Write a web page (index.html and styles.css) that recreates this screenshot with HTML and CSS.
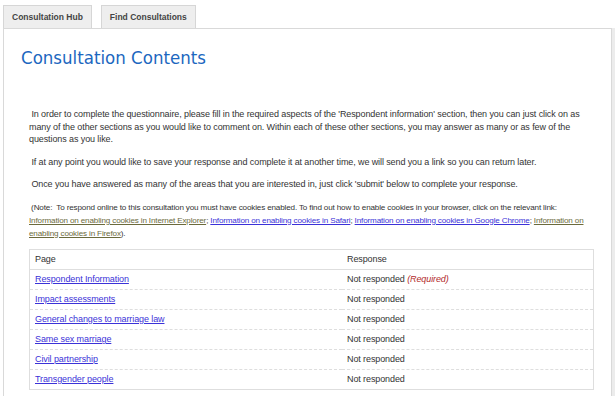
FILE: index.html
```html
<!DOCTYPE html>
<html lang="en">
<head>
  <meta charset="UTF-8" />
  <title>Consultation Contents</title>
  <link rel="stylesheet" href="styles.css">
</head>
<body>

  <div class="tabs">
    <a class="tab" href="#">Consultation Hub</a>
    <a class="tab" href="#">Find Consultations</a>
  </div>

  <div class="panel">
    <h1 class="title">Consultation Contents</h1>

    <div class="intro">
      <p>&nbsp;In order to complete the questionnaire, please fill in the required aspects of the 'Respondent information' section, then you can just click on as many of the other sections as you would like to comment on. Within each of these other sections, you may answer as many or as few of the questions as you like.</p>
      <p>&nbsp;If at any point you would like to save your response and complete it at another time, we will send you a link so you can return later.</p>
      <p>&nbsp;Once you have answered as many of the areas that you are interested in, just click 'submit' below to complete your response.</p>
      <p class="note">&nbsp;(Note:&nbsp; To respond online to this consultation you must have cookies enabled. To find out how to enable cookies in your browser, click on the relevant link: <a class="visited" href="#">Information on enabling cookies in Internet Explorer</a>; <a href="#">Information on enabling cookies in Safari</a>; <a href="#">Information on enabling cookies in Google Chrome</a>; <a class="visited" href="#">Information on enabling cookies in Firefox</a>).</p>
    </div>

    <table class="contents">
      <thead>
        <tr><th class="col-page">Page</th><th>Response</th></tr>
      </thead>
      <tbody>
        <tr><td><a href="#">Respondent Information</a></td><td>Not responded <em class="required">(Required)</em></td></tr>
        <tr><td><a href="#">Impact assessments</a></td><td>Not responded</td></tr>
        <tr><td><a href="#">General changes to marriage law</a></td><td>Not responded</td></tr>
        <tr><td><a href="#">Same sex marriage</a></td><td>Not responded</td></tr>
        <tr><td><a href="#">Civil partnership</a></td><td>Not responded</td></tr>
        <tr><td><a href="#">Transgender people</a></td><td>Not responded</td></tr>
      </tbody>
    </table>
  </div>

</body>
</html>
```

FILE: styles.css
```css
html, body {
  margin: 0;
  padding: 0;
  background: white;
  font-family: 'Liberation Sans', Arial, sans-serif;
  color: #333;
  overflow: hidden;
}

.tabs {
  display: flex;
  gap: 9px;
  padding: 5px 0 0 3px;
}

.tab {
  display: flex;
  align-items: center;
  height: 22px;
  padding: 0 8px;
  background: #eeeeee;
  border: 1px solid #d6d6d6;
  border-bottom: none;
  font-size: 8.5px;
  font-weight: bold;
  color: #444;
  text-decoration: none;
}

.panel {
  margin-left: 3px;
  width: 609px;
  height: 400px;
  border: 1px solid #d9d9d9;
  border-bottom: none;
  box-shadow: 3px 0 0 #ececec;
  padding: 0 17px;
  box-sizing: border-box;
}

.title {
  margin: 0;
  padding-top: 18px;
  font-family: 'DejaVu Sans Condensed', 'DejaVu Sans', sans-serif;
  font-size: 18.5px;
  font-weight: normal;
  color: #1c67c0;
}

.intro {
  padding: 40px 0 0 8px;
  font-size: 9px;
  letter-spacing: -0.1px;
  line-height: 12.5px;
}

.intro p {
  margin: 0 0 10px;
}

.intro .note {
  font-size: 8.1px;
  letter-spacing: -0.15px;
  line-height: 13px;
  margin-bottom: 9px;
}

a {
  color: #3b32d8;
}

a.visited {
  color: #6b6a3c;
}

.contents {
  margin-left: 8px;
  width: 565px;
  border-collapse: collapse;
  border: 1px solid #dedede;
  font-size: 9px;
  letter-spacing: -0.1px;
}

.contents th,
.contents td {
  height: 19px;
  padding: 0 5px;
  text-align: left;
  font-weight: normal;
}

.contents .col-page {
  width: 302px;
}

.contents th {
  border-bottom: 1px solid #dedede;
}

.contents tbody tr + tr td {
  border-top: 1px dashed #dedede;
}

.required {
  color: #b22a2a;
}
```
